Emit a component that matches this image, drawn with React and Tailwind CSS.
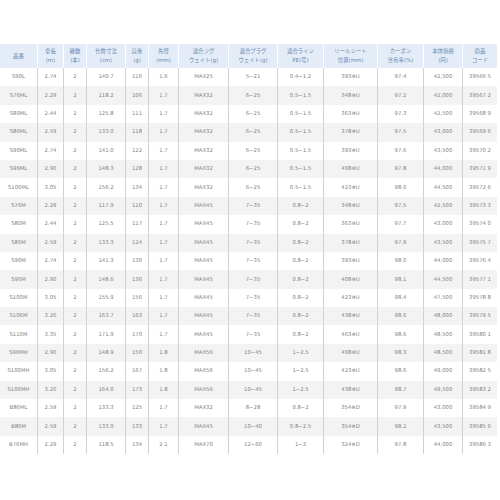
import React from "react";

const headers = [
  ["品番"],
  ["全長", "(m)"],
  ["継数", "(本)"],
  ["仕舞寸法", "(cm)"],
  ["自重", "(g)"],
  ["先径", "(mm)"],
  ["適合ジグ", "ウェイト(g)"],
  ["適合プラグ", "ウェイト(g)"],
  ["適合ライン", "PE(号)"],
  ["リールシート", "位置(mm)"],
  ["カーボン", "含有率(%)"],
  ["本体価格", "(円)"],
  ["商品", "コード"],
];

const rows = [
  "S90L 2.74 2 140.7 116 1.6 MAX25 5~21 0.4~1.2 393※U 97.4 42,500 39566_5",
  "S76ML 2.29 2 118.2 106 1.7 MAX32 6~25 0.5~1.5 348※U 97.2 42,000 39567_2",
  "S80ML 2.44 2 125.8 111 1.7 MAX32 6~25 0.5~1.5 363※U 97.3 42,500 39568_9",
  "S86ML 2.59 2 133.0 118 1.7 MAX32 6~25 0.5~1.5 378※U 97.5 43,000 39569_6",
  "S90ML 2.74 2 141.0 122 1.7 MAX32 6~25 0.5~1.5 393※U 97.6 43,500 39570_2",
  "S96ML 2.90 2 148.3 128 1.7 MAX32 6~25 0.5~1.5 408※U 97.8 44,000 39571_9",
  "S100ML 3.05 2 156.2 134 1.7 MAX32 6~25 0.5~1.5 423※U 98.0 44,500 39572_6",
  "S76M 2.29 2 117.9 110 1.7 MAX45 7~35 0.8~2 348※U 97.5 42,500 39573_3",
  "S80M 2.44 2 125.5 117 1.7 MAX45 7~35 0.8~2 363※U 97.7 43,000 39574_0",
  "S86M 2.59 2 133.3 124 1.7 MAX45 7~35 0.8~2 378※U 97.9 43,500 39575_7",
  "S90M 2.74 2 141.3 130 1.7 MAX45 7~35 0.8~2 393※U 98.0 44,000 39576_4",
  "S96M 2.90 2 148.6 136 1.7 MAX45 7~35 0.8~2 408※U 98.1 44,500 39577_1",
  "S100M 3.05 2 155.9 156 1.7 MAX45 7~35 0.8~2 423※U 98.4 47,500 39578_8",
  "S106M 3.20 2 163.7 163 1.7 MAX45 7~35 0.8~2 438※U 98.6 48,000 39579_5",
  "S110M 3.35 2 171.9 170 1.7 MAX45 7~35 0.8~2 463※U 98.6 48,500 39580_1",
  "S96MH 2.90 2 148.9 150 1.8 MAX56 10~45 1~2.5 408※U 98.3 48,500 39581_8",
  "S100MH 3.05 2 156.2 167 1.8 MAX56 10~45 1~2.5 423※U 98.6 49,000 39582_5",
  "S106MH 3.20 2 164.0 173 1.8 MAX56 10~45 1~2.5 438※U 98.7 49,500 39583_2",
  "B86ML 2.59 2 133.3 125 1.7 MAX32 8~28 0.8~2 354※D 97.9 43,000 39584_9",
  "B86M 2.59 2 133.0 133 1.7 MAX45 10~40 0.8~2.5 354※D 98.2 43,500 39585_6",
  "B76MH 2.29 2 118.5 134 2.1 MAX70 12~60 1~3 324※D 97.8 44,000 39586_3",
].map((r) => r.split(" ").map((c) => c.replace("_", " ")));

const cols =
  "grid grid-cols-[37px_26px_23px_39px_23px_30px_50px_49px_46px_54px_46px_39px_35px]";

export default function App() {
  return (
    <div
      className="w-[500px] h-[500px] bg-white pt-[44px]"
      style={{ fontFamily: '"DejaVu Sans", Verdana, "Noto Sans CJK JP", sans-serif' }}
    >
      <div className="w-[497px]">
        <div className={`${cols} h-[24px] bg-[#e4edf7] text-[#6688b0] text-[5.4px] leading-[9px]`}>
          {headers.map((h, i) => (
            <div
              key={i}
              className={`flex flex-col items-center justify-center text-center ${i > 0 ? "border-l border-white" : ""}`}
            >
              {h.map((l, j) => (
                <span key={j}>{l}</span>
              ))}
            </div>
          ))}
        </div>
        {rows.map((r, ri) => (
          <div
            key={ri}
            className={`${cols} h-[18.4px] text-[#828282] text-[5.3px] ${ri % 2 === 1 ? "bg-[#f3f3f3]" : "bg-white"}`}
          >
            {r.map((c, ci) => (
              <div
                key={ci}
                className={`flex items-center justify-center whitespace-nowrap ${ci > 0 ? "border-l border-[#d2d2d2]" : ""}`}
              >
                {c}
              </div>
            ))}
          </div>
        ))}
      </div>
    </div>
  );
}
